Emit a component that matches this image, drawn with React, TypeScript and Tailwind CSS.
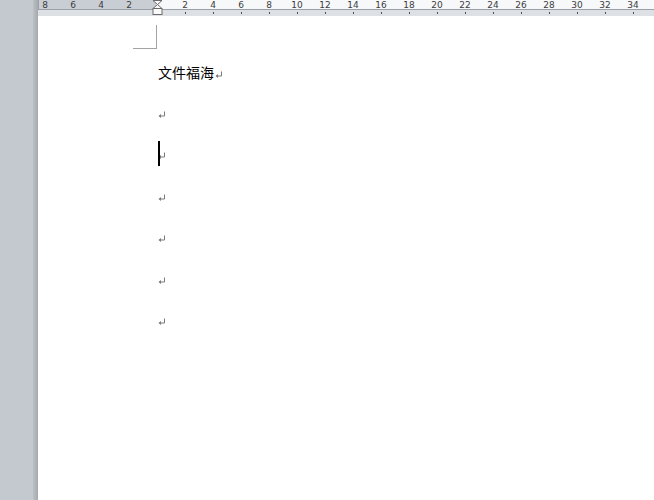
import React from 'react';

const labels = ['8', '6', '4', '2', '', '2', '4', '6', '8', '10', '12', '14', '16', '18', '20', '22', '24', '26', '28', '30', '32', '34'];

// small word-style paragraph mark
const ParaMark: React.FC = () => (
  <svg width="8" height="8" viewBox="0 0 8 8" className="shrink-0">
    <path d="M6.5 0.5 V5 H1.5" stroke="#7a7a7a" strokeWidth="1" fill="none" />
    <path d="M0.5 5 L3 3 V7 Z" fill="#7a7a7a" />
  </svg>
);

const Ruler: React.FC = () => (
  <div className="relative h-[16px] shrink-0 font-['DejaVu_Sans',sans-serif] text-[9px] text-[#3c3c3c]">
    <div className="flex h-[10px] border-b border-[#9aa1a9]">
      <div className="w-[118px] bg-[#c9ced5] border-l border-[#9aa1a9]" />
      <div className="flex-1 bg-[#f7f8f9]" />
    </div>
    <div className="h-[6px] bg-[#dde0e4]" />

    {labels.map((l, i) =>
      l ? (
        <span key={i} className="absolute top-0 w-[20px] -ml-[10px] text-center leading-[10px]" style={{ left: 7 + 28 * i }}>
          {l}
        </span>
      ) : null
    )}
    {labels.map((l, i) =>
      i > 4 ? <span key={'t' + i} className="absolute top-[12px] h-[2px] w-px bg-[#505050]" style={{ left: 7 + 28 * i }} /> : null
    )}

    {/* indent markers */}
    <svg className="absolute top-0 left-[114px]" width="11" height="16" viewBox="0 0 11 16">
      <path d="M1 0.5 L10 0.5 L5.5 4.5 Z" fill="#fafafa" stroke="#6b6b6b" strokeWidth="1" />
      <path d="M5.5 4.5 L10 8.5 L1 8.5 Z" fill="#fafafa" stroke="#6b6b6b" strokeWidth="1" />
      <rect x="1" y="8.5" width="9" height="6" fill="#fafafa" stroke="#6b6b6b" strokeWidth="1" />
    </svg>
  </div>
);

export default function App() {
  return (
    <div className="flex h-[500px] w-[654px] overflow-hidden bg-[#c3c8ce]">
      <div className="flex w-[38px] shrink-0">
        <div className="flex-1 bg-[#c4c9cf]" />
        <div className="w-[5px] bg-gradient-to-r from-[#bcc1c6] to-[#a4a9ae]" />
      </div>

      <div className="flex flex-1 flex-col">
        <Ruler />
        <div className="flex-1 bg-white">
          <div className="ml-[95px] mt-[9px] h-[24px] w-[24px] border-b border-r border-[#a3a3a3]" />
          <div className="ml-[120px] mt-[2px] font-['Noto_Sans_CJK_SC',sans-serif] text-[14px] text-black">
            <div className="flex h-[42px] items-center">
              <span className="leading-none">文件福海</span>
              <span className="mt-[5px] ml-[1px]"><ParaMark /></span>
            </div>
            <div className="flex h-[41.5px] items-center pt-[2px]"><ParaMark /></div>
            <div className="relative flex h-[41.5px] items-center pt-[2px]">
              <span className="absolute left-0 top-[6px] h-[25px] w-[2px] bg-black" />
              <ParaMark />
            </div>
            <div className="flex h-[41.5px] items-center pt-[2px]"><ParaMark /></div>
            <div className="flex h-[41.5px] items-center pt-[2px]"><ParaMark /></div>
            <div className="flex h-[41.5px] items-center pt-[2px]"><ParaMark /></div>
            <div className="flex h-[41.5px] items-center pt-[2px]"><ParaMark /></div>
          </div>
        </div>
      </div>
    </div>
  );
}
